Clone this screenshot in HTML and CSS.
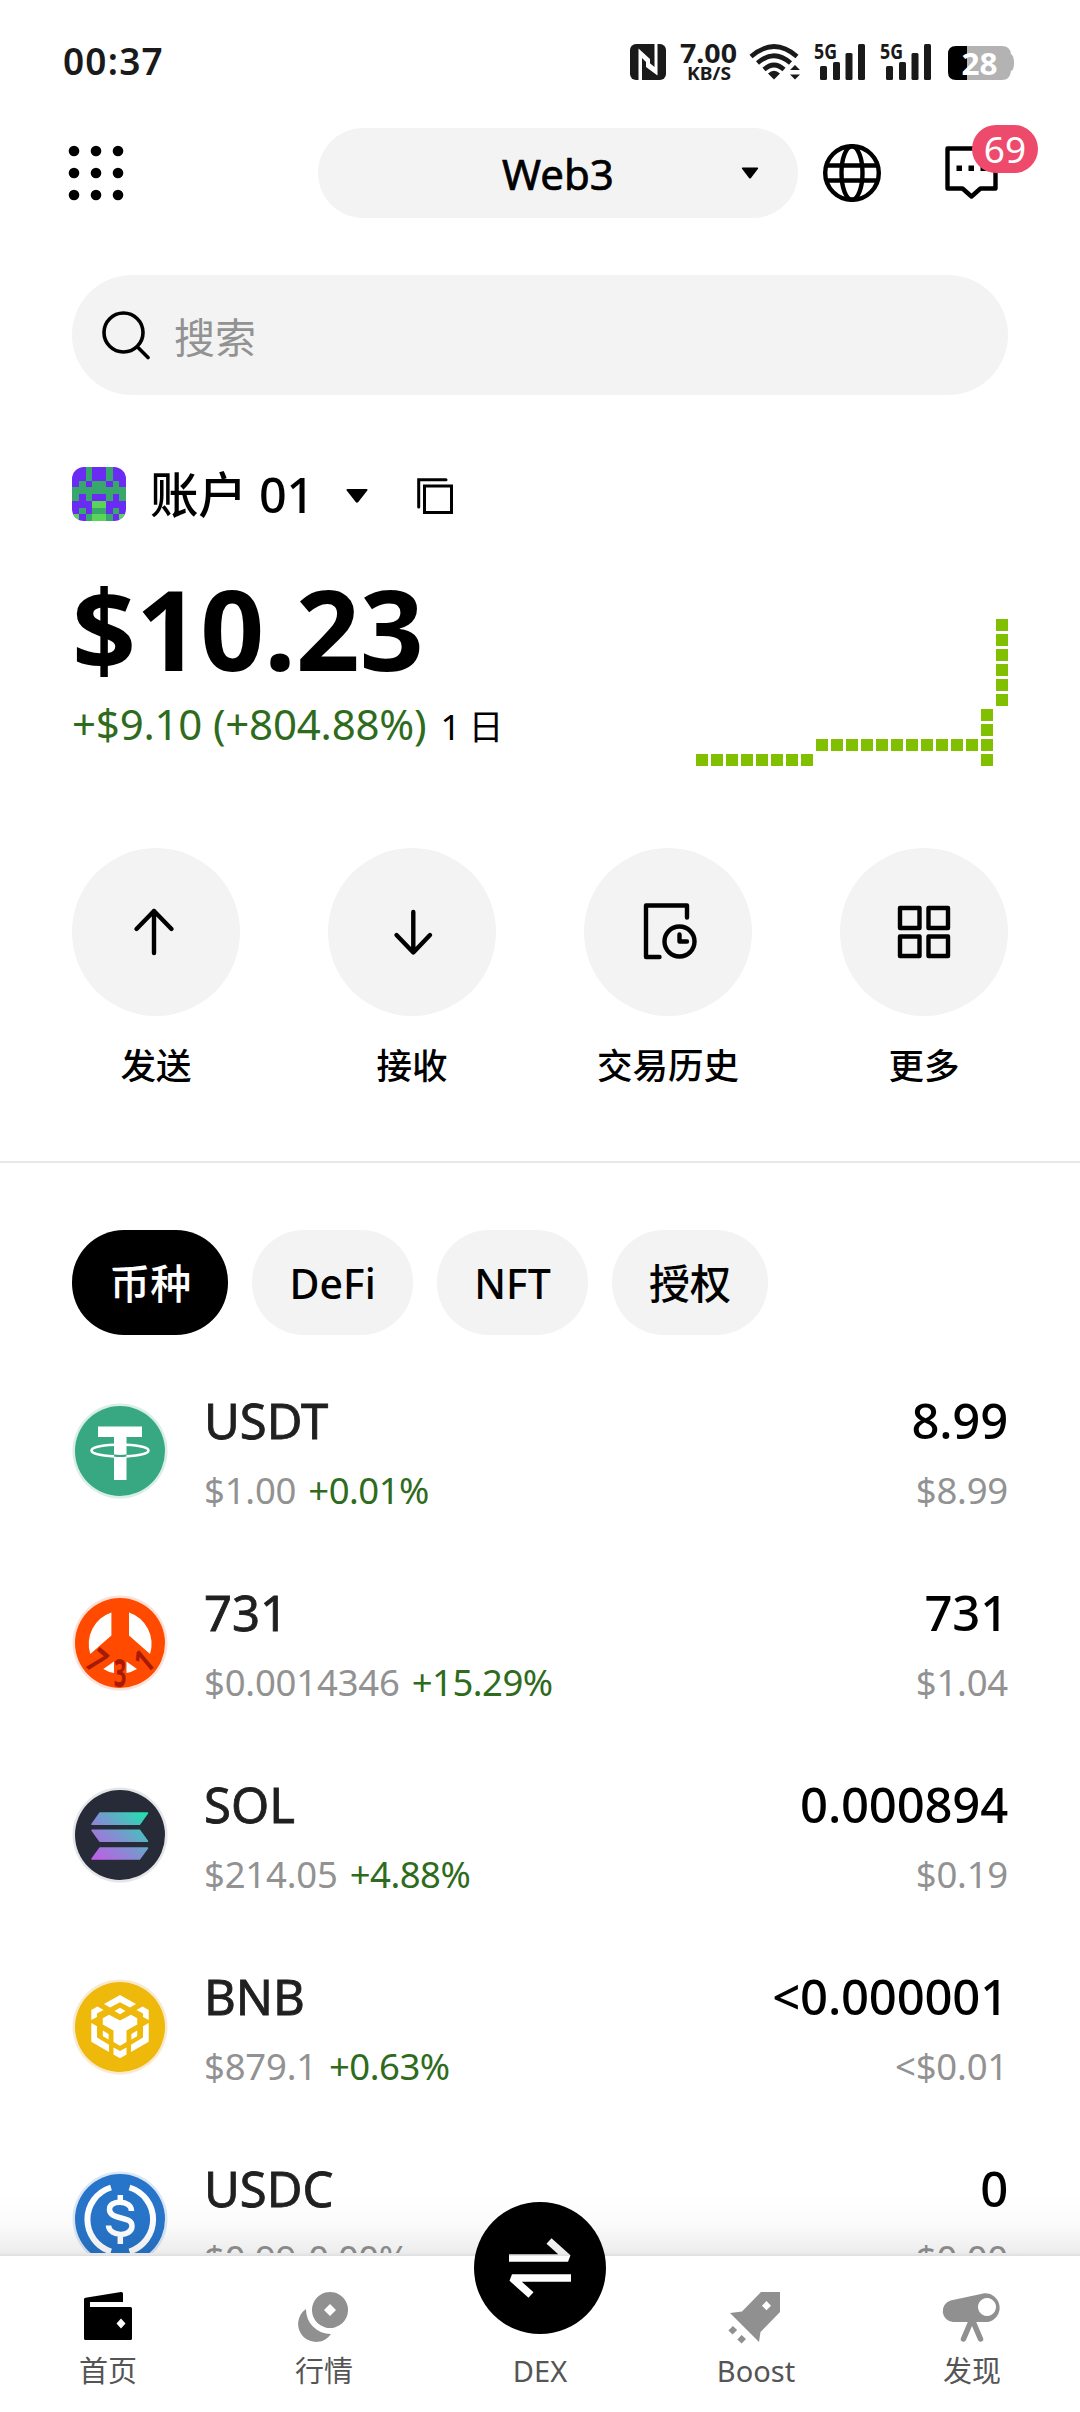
FILE: index.html
```html
<!DOCTYPE html>
<html lang="zh-CN">
<head>
<meta charset="utf-8">
<title>Web3</title>
<link rel="stylesheet" href="styles.css">
</head>
<body>
<div class="screen">
  <div class="status">
    <span class="clock">00:37</span>
    <svg class="status-icons" width="386" height="40" viewBox="629 42 386 40" fill="#1a1a1a">
      <rect x="630" y="44" width="36" height="36" rx="6"/>
      <path d="M638.500 80V48.500L650 59V66L642 58V80ZM657.500 44V75.500L646 67V60L654.500 67V44Z" fill="#fff"/>
      <text class="b" x="680" y="63.300" font-size="26" textLength="57" lengthAdjust="spacingAndGlyphs">7.00</text>
      <text class="b" x="687" y="79.500" font-size="18" textLength="44" lengthAdjust="spacingAndGlyphs">KB/S</text>
      <g fill="none" stroke="#1a1a1a" stroke-width="4.600">
        <path d="M751 56.500Q774 36.500 797 56.500"/>
        <path d="M757.500 63Q774 48.500 790.500 63"/>
        <path d="M764 69.500Q774 60.500 784 69.500"/>
      </g>
      <path d="M768 73.500Q774 68 780 73.500L774 79.500ZM795 65L800 70H790ZM795 79.500L790 74.500H800Z"/>
      <text class="b" x="814" y="59" font-size="21.500" textLength="23" lengthAdjust="spacingAndGlyphs">5G</text>
      <rect x="820" y="66" width="7" height="14" rx="1.500"/><rect x="833" y="62" width="7" height="18" rx="1.500"/><rect x="845.500" y="53" width="7" height="27" rx="1.500"/><rect x="858" y="44" width="7" height="36" rx="1.500"/>
      <text class="b" x="880" y="59" font-size="21.500" textLength="23" lengthAdjust="spacingAndGlyphs">5G</text>
      <rect x="886" y="66" width="7" height="14" rx="1.500"/><rect x="899" y="62" width="7" height="18" rx="1.500"/><rect x="911.500" y="53" width="7" height="27" rx="1.500"/><rect x="924" y="44" width="7" height="36" rx="1.500"/>
      <path d="M967 46H1002Q1010 46 1011 54Q1014 56 1014 63T1011 71Q1010 80 1002 80H967Z" fill="#b3b3b3"/>
      <path d="M967 46H956Q948 46 948 54V72Q948 80 956 80H967Z" fill="#000"/>
      <text class="b" x="961.500" y="74.500" font-size="30" fill="#fff" textLength="36" lengthAdjust="spacingAndGlyphs">28</text>
    </svg>
  </div>

  <header class="header">
    <svg class="menu" width="56" height="56" viewBox="68 146 56 56"><g><circle cx="74" cy="152" r="5.300"/><circle cx="96" cy="152" r="5.300"/><circle cx="118" cy="152" r="5.300"/><circle cx="74" cy="174" r="5.300"/><circle cx="96" cy="174" r="5.300"/><circle cx="118" cy="174" r="5.300"/><circle cx="74" cy="196" r="5.300"/><circle cx="96" cy="196" r="5.300"/><circle cx="118" cy="196" r="5.300"/></g></svg>
    <div class="switcher">
      <span>Web3</span>
      <svg class="switcher-caret" width="18" height="12" viewBox="0 0 18 12"><path d="M1.500 .5H16.500Q17.500 .8 17 1.800L10 11Q9 12 8 11L1 1.800Q.5 .8 1.500 .5Z"/></svg>
    </div>
    <svg class="globe" width="60" height="60" viewBox="-30 -30 60 60" fill="none" stroke="#000" stroke-width="4.400"><circle r="26.800"/><ellipse rx="10.500" ry="26.800"/><path d="M-25-7.500H25M-25 7.500H25"/></svg>
    <div class="messages">
      <svg width="54" height="54" viewBox="0 0 54 54"><path d="M2.500 2.500H50.500V42.500H35.500L26.500 50.500L17.500 42.500H2.500Z" fill="none" stroke="#000" stroke-width="4.400" stroke-linejoin="round"/><path d="M11.500 19.500h5.500v5.500h-5.500zM23.500 19.500h5.500v5.500h-5.500zM35.500 19.500h5.500v5.500h-5.500z"/></svg>
      <span class="badge">69</span>
    </div>
  </header>

  <div class="search">
    <svg width="50" height="50" viewBox="0 0 50 50" fill="none" stroke="#000" stroke-width="3.600" stroke-linecap="round"><circle cx="22.500" cy="22.500" r="19.500"/><path d="M37 37.500L47 47.500"/></svg>
    <span>搜索</span>
  </div>

  <div class="account">
    <svg class="avatar" width="54" height="54" viewBox="0 0 8 8" preserveAspectRatio="none" shape-rendering="crispEdges">
      <path fill="#6a2bf2" d="M0 0h8v8H0z"/>
      <path fill="#38a76c" d="M2 0h1v2H2zM5 0h1v2H5zM1 2h1v1H1zM3 2h2v1H3zM6 2h1v1H6zM0 3h8v1H0zM0 4h1v1H0zM2 4h1v1H2zM5 4h1v1H5zM7 4h1v1H7zM1 6h1v1H1zM3 6h2v1H3zM6 6h1v1H6zM2 7h1v1H2zM5 7h1v1H5z"/>
      <path fill="#5bd45c" d="M3 5h2v1H3zM3 7h2v1H3zM0 7h1v1H0zM7 7h1v1H7z"/>
    </svg>
    <span class="account-name">账户 01</span>
    <svg class="account-caret" width="22" height="14" viewBox="0 0 22 14"><path d="M1.500 0H20.500Q22 .3 21.300 1.600L12.300 13Q11 14.500 9.700 13L.7 1.600Q0 .3 1.500 0Z"/></svg>
    <svg class="copy" width="36" height="36" viewBox="0 0 36 36" fill="none" stroke="#000" stroke-width="3"><path d="M29 1.700H1.700V29" stroke-linecap="round"/><rect x="7.500" y="8" width="27" height="26.500"/></svg>
  </div>

  <section class="overview">
    <div>
      <div class="balance">$10.23</div>
      <div class="change"><span class="gain">+$9.10 (+804.88%)</span><span class="period">1 日</span></div>
    </div>
    <svg class="chart" width="312" height="147" viewBox="0 0 312 147" fill="none" stroke="#80c000" stroke-width="12" stroke-dasharray="12 3">
      <path d="M0 141H117M120 126H297M291 90V117M291 135V147M306 0V87"/>
    </svg>
  </section>

  <nav class="actions">
    <div class="action"><i><svg width="168" height="168" viewBox="72 848 168 168"><path d="M154 953V911M136.500 929L154 911L171.500 929"/></svg></i>发送</div>
    <div class="action"><i><svg width="168" height="168" viewBox="328 848 168 168"><path d="M413.300 912V952M396.500 935L413.300 952.500L430 935"/></svg></i>接收</div>
    <div class="action"><i><svg width="168" height="168" viewBox="584 848 168 168"><path d="M687 917.500V905.500H646V957H659.500M679.500 934.500V941.500H687"/><circle cx="679.500" cy="941.500" r="15"/></svg></i>交易历史</div>
    <div class="action"><i><svg width="168" height="168" viewBox="840 848 168 168"><path d="M900 908h19.500v20H900zM928.500 908h19.500v20h-19.500zM900 936.500h19.500v19.500H900zM928.500 936.500h19.500v19.500h-19.500z"/></svg></i>更多</div>
  </nav>

  <div class="tabs">
    <span class="tab active">币种</span><span class="tab">DeFi</span><span class="tab">NFT</span><span class="tab">授权</span>
  </div>

  <main class="tokens">
    <div class="token">
      <svg class="coin" viewBox="0 0 96 96"><circle cx="48" cy="48" r="47.500" fill="#d9eee6"/><circle cx="48" cy="48" r="45" fill="#38a883"/><g fill="none" stroke="#fff"><ellipse cx="48" cy="47.500" rx="28.500" ry="6" stroke-width="2.600"/></g><path d="M26 23.500H70V34H54.500V77H42V34H26Z" fill="#fff"/><path d="M42 52.500Q48 53.500 54.500 52.500" stroke="#38a883" stroke-width="2" fill="none"/></svg>
      <div class="info"><div class="name">USDT</div><div class="sub">$1.00<span class="gain">+0.01%</span></div></div>
      <div class="holding"><div class="name">8.99</div><div class="sub">$8.99</div></div>
    </div>
    <div class="token">
      <svg class="coin" viewBox="0 0 96 96"><circle cx="48" cy="48" r="47.500" fill="#fbe2d8"/><circle cx="48" cy="48" r="45" fill="#ff4a00"/><path d="M39.400 17.500V40.600L18.300 59A33 33 0 0 1 39.400 17.500ZM57 17.500V40.600L78 59A33 33 0 0 0 57 17.500ZM42 66.500L31.300 74Q36 77 42 78ZM54.500 66.500L65 74Q60 77 54.500 78Z" fill="#fff"/><g fill="#a81a08" font-size="40" font-weight="700" text-anchor="middle"><text transform="translate(25.500 65) rotate(40) scale(.75 1)" y="13" font-size="34">7</text><text transform="translate(48 77) scale(.55 1)" y="14.500">3</text><text transform="translate(71.500 65.500) rotate(-40) scale(.8 1)" y="12" font-size="32">1</text></g></svg>
      <div class="info"><div class="name">731</div><div class="sub">$0.0014346<span class="gain">+15.29%</span></div></div>
      <div class="holding"><div class="name">731</div><div class="sub">$1.04</div></div>
    </div>
    <div class="token">
      <svg class="coin" viewBox="0 0 96 96"><defs><linearGradient id="sol" gradientUnits="userSpaceOnUse" x1="24" y1="76" x2="70" y2="24"><stop offset="0" stop-color="#c35be6"/><stop offset=".5" stop-color="#7d93d0"/><stop offset="1" stop-color="#22dfb0"/></linearGradient></defs><circle cx="48" cy="48" r="47.500" fill="#e4e6ea"/><circle cx="48" cy="48" r="45" fill="#272b37"/><path fill="url(#sol)" stroke="url(#sol)" stroke-width="1.500" stroke-linejoin="round" d="M28 26H75.500L67.500 37.300H20ZM20 43.300H67.500L75.500 54.300H28ZM28 61H75.500L67.500 72H20Z"/></svg>
      <div class="info"><div class="name">SOL</div><div class="sub">$214.05<span class="gain">+4.88%</span></div></div>
      <div class="holding"><div class="name">0.000894</div><div class="sub">$0.19</div></div>
    </div>
    <div class="token">
      <svg class="coin" viewBox="0 0 96 96"><circle cx="48" cy="48" r="47.500" fill="#f8ead0"/><circle cx="48" cy="48" r="45" fill="#efb90b"/><g fill="#fff"><path d="M32 25L48 16L64 25L58 28.500L48 23.300L38 28.500ZM48 28.700L53.500 32L48 35.300L42.500 32ZM30.800 39.300L37 35.700L48 41.500L59 35.700L65.200 39.300V45.500L54.500 51.500V63L48 66.700L41.500 63V51.500L30.800 45.500ZM41.500 68.500L48 72L54.500 68.500V75.500L48 79.300L41.500 75.500Z"/><path id="bnb" d="M19.300 31L25.500 27.500L31.500 31L25 34.500V38L19.300 41ZM19.300 44L25 47.200V58.500L37 65.800V73L19.300 62.700ZM30.800 51.500L36.600 55V60.500L30.800 57.200Z"/><use href="#bnb" transform="matrix(-1 0 0 1 96 0)"/></g></svg>
      <div class="info"><div class="name">BNB</div><div class="sub">$879.1<span class="gain">+0.63%</span></div></div>
      <div class="holding"><div class="name">&lt;0.000001</div><div class="sub">&lt;$0.01</div></div>
    </div>
    <div class="token">
      <svg class="coin" viewBox="0 0 96 96"><circle cx="48" cy="48" r="47.500" fill="#dce8f5"/><circle cx="48" cy="48" r="45" fill="#2775ca"/><path d="M39 16.500A33.500 33.500 0 0 0 39 80.500M57.500 16.500A33.500 33.500 0 0 1 57.500 80.500" fill="none" stroke="#fff" stroke-width="6"/><path d="M48.300 24V33M48.300 64V73M59.500 40C59.500 28.500 37 28.500 37.500 38.500C38 50 60 44 60 55C60 66.500 37 66 36.500 54.500" fill="none" stroke="#fff" stroke-width="5.500"/></svg>
      <div class="info"><div class="name">USDC</div><div class="sub">$0.99<span>0.00%</span></div></div>
      <div class="holding"><div class="name">0</div><div class="sub">$0.00</div></div>
    </div>
  </main>

  <footer class="tabbar">
    <div class="item"><svg width="60" height="56" viewBox="78 2290 60 56"><path d="M84 2299.500Q84 2298 85.500 2297.700L121 2292Q123 2291.800 123 2293.500V2302H90V2307H130.500Q132 2307 132 2308.500V2338.500Q132 2340 130.500 2340H85.500Q84 2340 84 2338.500ZM121 2318.500L116.500 2323.500L121 2328.500L125.500 2323.500Z"/></svg><span>首页</span></div>
    <div class="item"><svg width="60" height="56" viewBox="294 2290 60 56" fill="#909090"><path fill-rule="evenodd" d="M330 2292a18 18 0 1 0 .01 0ZM330 2304L336 2310L330 2316L324 2310Z"/><path d="M306 2309A24.500 24.500 0 0 0 331 2334A18 18 0 1 1 306 2309Z"/></svg><span>行情</span></div>
    <div class="item dex"><i><svg width="132" height="132" viewBox="474 2202 132 132" fill="none" stroke="#fff" stroke-width="7.500" stroke-linejoin="bevel"><path d="M509 2258H568L549 2241M571 2278H512L531 2295"/></svg></i><span>DEX</span></div>
    <div class="item"><svg width="60" height="56" viewBox="726 2290 60 56" fill="#909090"><path fill-rule="evenodd" d="M761 2292H780V2312L760.500 2332L759 2342L730 2313L742 2311.500ZM766.500 2301L762 2305.700L766.500 2310.300L771 2305.700Z"/><path d="M735 2328L730.500 2332.500M743.800 2337L739.500 2341.500" stroke="#909090" stroke-width="6"/></svg><span>Boost</span></div>
    <div class="item"><svg width="64" height="56" viewBox="940 2290 64 56" fill="#909090"><path fill-rule="evenodd" d="M950.500 2300.500L984.500 2293.300A14.500 14.500 0 0 1 988 2322H953A11 11 0 0 1 950.500 2300.500ZM987 2298a9 9 0 1 0 .01 0Z"/><path d="M963.500 2339L972 2319L980.500 2339" fill="none" stroke="#909090" stroke-width="5.500" stroke-linecap="round"/></svg><span>发现</span></div>
  </footer>
</div>
</body>
</html>
```
FILE: styles.css
```css
* { box-sizing: border-box; }
body { margin: 0; background: #fff; }
svg { display: block; flex: none; }

.screen {
  width: 1080px;
  height: 2412px;
  position: relative;
  overflow: hidden;
  background: #fff;
  color: #000;
  font-family: "Noto Sans", "Noto Sans CJK SC", sans-serif;
}

.status {
  height: 108px;
  padding: 42px 65px 0 63px;
  display: flex;
  justify-content: space-between;
  color: #1a1a1a;
}
.clock { font-size: 37px; line-height: 38px; font-weight: 600; letter-spacing: 1.2px; }
.status-icons { overflow: visible; }
.status-icons .b { font-weight: 700; }

.header {
  height: 130px;
  padding: 0 80px 0 68px;
  display: flex;
  align-items: center;
}
.switcher {
  position: relative;
  flex: none;
  width: 480px;
  height: 90px;
  margin-left: 194px;
  border-radius: 45px;
  background: #f3f3f3;
  display: flex;
  align-items: center;
  justify-content: center;
  font-size: 42px;
  -webkit-text-stroke: .7px currentColor;
}
.switcher-caret { position: absolute; left: 423px; top: 39px; }
.globe { margin-left: 24px; }
.messages { position: relative; margin-left: 63px; }
.badge {
  position: absolute;
  left: 27px;
  top: -21px;
  width: 66px;
  height: 48px;
  border-radius: 24px;
  background: #ee4b6c;
  color: #fff;
  font-size: 37px;
  line-height: 47px;
  text-align: center;
}

.search {
  height: 120px;
  margin: 37px 72px 0;
  padding-left: 29px;
  border-radius: 60px;
  background: #f3f3f3;
  display: flex;
  align-items: center;
  gap: 23px;
  color: #929292;
  font-size: 41px;
}

.account {
  height: 54px;
  margin: 72px 72px 0;
  display: flex;
  align-items: center;
  font-size: 48.5px;
  font-weight: 500;
}
.avatar { border-radius: 12px; }
.account-name { margin-left: 24px; line-height: 54px; width: 196px; white-space: nowrap; letter-spacing: -.2px; }
.account-caret { margin-top: 3px; }
.copy { margin: 3px 0 0 49px; }

.overview {
  height: 328px;
  padding: 47px 72px 0 72px;
  display: flex;
  justify-content: space-between;
}
.balance { font-size: 112px; line-height: 120px; font-weight: 700; }
.change { display: flex; align-items: baseline; font-size: 42px; line-height: 71px; letter-spacing: -.2px; }
.gain { color: #2f6b1c; }
.period { margin-left: 14px; font-size: 35px; letter-spacing: -.5px; white-space: pre; }
.chart { margin-top: 51px; }

.actions {
  height: 315px;
  margin-top: -1px;
  padding: 0 72px;
  border-bottom: 2px solid #e8e8e8;
  display: flex;
  justify-content: space-between;
}
.action {
  width: 168px;
  display: flex;
  flex-direction: column;
  align-items: center;
  gap: 24px;
  font-size: 35.5px;
  line-height: 50px;
  font-weight: 500;
  white-space: nowrap;
}
.action i { border-radius: 50%; background: #f3f3f3; }
.action svg { fill: none; stroke: #000; stroke-width: 4.4; stroke-linecap: round; stroke-linejoin: round; }

.tabs { display: flex; gap: 24px; padding: 67px 72px 0; }
.tab {
  height: 105px;
  padding: 0 37.2px;
  border-radius: 52px;
  background: #f3f3f3;
  font-size: 41px;
  line-height: 106px;
  font-weight: 500;
}
.tab.active { background: #000; color: #fff; }

.tokens { height: 918px; padding: 56px 72px 0; overflow: hidden; }
.token { height: 192px; display: flex; }
.coin { width: 96px; height: 96px; margin-top: 12px; }
.info { margin-left: 36px; flex: 1; }
.name { font-size: 49px; line-height: 59px; color: #202020; -webkit-text-stroke: .8px currentColor; }
.sub { margin-top: 16px; font-size: 36.5px; line-height: 48px; color: #929292; letter-spacing: -.2px; }
.sub span { margin-left: 12px; letter-spacing: -.5px; }
.holding { text-align: right; }
.holding .name { color: #000; font-weight: 500; letter-spacing: -.2px; -webkit-text-stroke: 0; }

.tabbar {
  position: absolute;
  left: 0;
  right: 0;
  bottom: 0;
  height: 156px;
  background: #fff;
  display: flex;
  font-size: 29px;
  line-height: 40px;
  color: #555;
}
.tabbar::before {
  content: "";
  position: absolute;
  left: 0;
  right: 0;
  bottom: 100%;
  height: 64px;
  background: linear-gradient(rgba(0,0,0,0), rgba(0,0,0,.015) 50%, rgba(0,0,0,.07) 94%, rgba(0,0,0,.13));
}
.item { width: 216px; padding-top: 34px; display: flex; flex-direction: column; align-items: center; gap: 5px; }
.item span { position: relative; }
.dex { padding-top: 0; margin-top: -54px; gap: 17px; }
.dex i { border-radius: 50%; background: #000; }
```
